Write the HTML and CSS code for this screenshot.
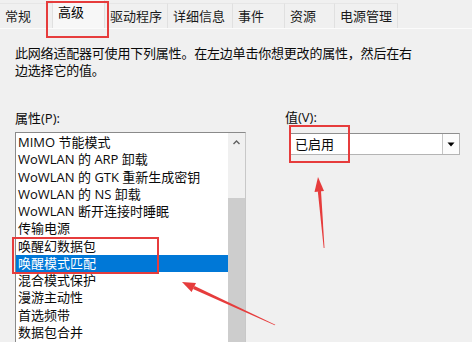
FILE: index.html
```html
<!DOCTYPE html>
<html lang="zh-CN">
<head>
<meta charset="utf-8">
<title>高级</title>
<link rel="stylesheet" href="styles.css">
</head>
<body>
<div class="window">
  <div class="tabs">
    <div class="tab">常规</div>
    <div class="tab tab-sel">高级</div>
    <div class="tab">驱动程序</div>
    <div class="tab">详细信息</div>
    <div class="tab">事件</div>
    <div class="tab">资源</div>
    <div class="tab">电源管理</div>
  </div>
  <div class="panel">
    <p class="desc">此网络适配器可使用下列属性。在左边单击你想更改的属性，然后在右<br>边选择它的值。</p>
    <div class="cols">
      <div class="col-left">
        <div class="label">属性(P):</div>
        <div class="listbox">
          <ul class="items">
            <li class="item">MIMO 节能模式</li>
            <li class="item">WoWLAN 的 ARP 卸载</li>
            <li class="item">WoWLAN 的 GTK 重新生成密钥</li>
            <li class="item">WoWLAN 的 NS 卸载</li>
            <li class="item">WoWLAN 断开连接时睡眠</li>
            <li class="item">传输电源</li>
            <li class="item">唤醒幻数据包</li>
            <li class="item item-sel">唤醒模式匹配</li>
            <li class="item">混合模式保护</li>
            <li class="item">漫游主动性</li>
            <li class="item">首选频带</li>
            <li class="item">数据包合并</li>
          </ul>
          <div class="scrollbar">
            <div class="sb-up">
              <svg width="17" height="17" viewBox="0 0 17 17"><polyline points="5.5,11 8.5,8 11.5,11" fill="none" stroke="#606060" stroke-width="1.4"/></svg>
            </div>
            <div class="sb-track"></div>
            <div class="sb-thumb"></div>
          </div>
        </div>
      </div>
      <div class="col-right">
        <div class="label label-v">值(V):</div>
        <div class="combo">
          <span class="combo-text">已启用</span>
          <span class="combo-btn">
            <svg width="8" height="5" viewBox="0 0 8 5"><polygon points="0.5,0.5 7.5,0.5 4,4.5" fill="#000"/></svg>
          </span>
        </div>
      </div>
    </div>
  </div>
  <svg class="annot" width="472" height="342" viewBox="0 0 472 342">
    <rect x="47" y="2" width="61" height="35" fill="none" stroke="#e63c3c" stroke-width="2"/>
    <rect x="13" y="238" width="145" height="35" fill="none" stroke="#e63c3c" stroke-width="2"/>
    <rect x="290" y="126" width="59" height="36" fill="none" stroke="#e63c3c" stroke-width="2"/>
    <polygon points="318,177 314.5,192 324,191" fill="#e63c3c"/>
    <polygon points="317.8,191.2 321,190.8 324.5,248 323.7,248" fill="#e63c3c"/>
    <polygon points="182,282 191.6,292 196,283" fill="#e63c3c"/>
    <polygon points="193,289 194.6,286 275.3,324.7 274.8,325.3" fill="#e63c3c"/>
  </svg>
</div>
</body>
</html>
```
FILE: styles.css
```css
html, body {
  margin: 0;
  padding: 0;
}
body {
  background: #f0f0f0;
  font-family: "Open Sans", "Noto Sans CJK SC", sans-serif;
  font-size: 13px;
  color: #0a0a0a;
}
.window {
  position: relative;
  width: 472px;
  height: 342px;
  overflow: hidden;
  background: #f0f0f0;
}
.tabs {
  display: grid;
  grid-template-columns: 53px 52px 63px 65px 52px 50px 63px;
  align-items: end;
  height: 28px;
  width: 398px;
}
.tab {
  box-sizing: border-box;
  height: 25px;
  line-height: 24px;
  padding-left: 5px;
  border-top: 1px solid #e6e6e6;
  border-right: 1px solid #e0e0e0;
  background: #f0f0f0;
  white-space: nowrap;
  color: #1a1a1a;
}
.tab-sel {
  height: 28px;
  line-height: 25px;
  background: #f7f7f7;
  border-top: none;
  color: #000;
}
.panel {
  border-top: 1px solid #fbfbfb;
  padding: 16px 0 0 15px;
}
.desc {
  margin: 0;
  line-height: 17px;
  letter-spacing: -0.2px;
  white-space: nowrap;
}
.cols {
  display: flex;
  margin-top: 31px;
  gap: 39px;
}
.col-left {
  width: 231px;
}
.label {
  line-height: 17px;
  height: 17px;
}
.label-v {
  margin-top: -1px;
}
.listbox {
  box-sizing: border-box;
  margin-top: 5px;
  width: 231px;
  height: 230px;
  display: flex;
  background: #fff;
  border: 1px solid #c8c8c8;
  border-top-color: #8a8a8a;
  border-left-color: #8a8a8a;
}
.items {
  list-style: none;
  margin: 0;
  padding: 1px 0 0 0;
  flex: 1;
  min-width: 0;
}
.item {
  height: 17.27px;
  line-height: 17.27px;
  padding-left: 2px;
  white-space: nowrap;
  overflow: hidden;
}
.item-sel {
  background: #0078d7;
  color: #fff;
}
.scrollbar {
  width: 17px;
  display: flex;
  flex-direction: column;
  background: #f0f0f0;
}
.sb-up {
  height: 17px;
}
.sb-up svg {
  display: block;
}
.sb-track {
  height: 48px;
}
.sb-thumb {
  flex: 1;
  background: #cdcdcd;
}
.col-right {
  width: 180px;
}
.combo {
  box-sizing: border-box;
  display: flex;
  align-items: stretch;
  margin: 7px 0 0 4px;
  width: 171px;
  height: 22px;
  background: #fff;
  border: 1px solid #b4b4b4;
  border-top-color: #8e8e8e;
  border-left-color: #9a9a9a;
}
.combo-text {
  flex: 1;
  line-height: 20px;
  padding-left: 5px;
}
.combo-btn {
  width: 16px;
  border-left: 1px solid #c4c4c4;
  background: #fcfcfc;
  display: flex;
  align-items: center;
  justify-content: center;
}
.combo-btn svg {
  display: block;
}
.annot {
  position: absolute;
  left: 0;
  top: 0;
  pointer-events: none;
}
```
